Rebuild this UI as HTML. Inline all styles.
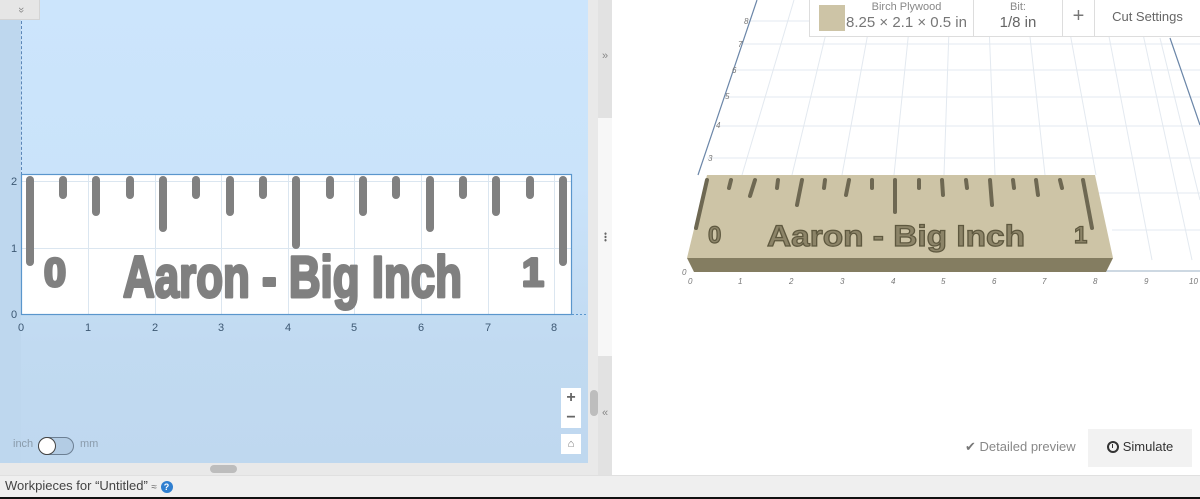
<!DOCTYPE html>
<html><head><meta charset="utf-8"><style>
*{margin:0;padding:0;box-sizing:border-box}
body{width:1200px;height:499px;overflow:hidden;position:relative;font-family:"Liberation Sans",sans-serif;background:#fff}
.abs{position:absolute}
</style></head><body>
<!-- left panel -->
<div class="abs" style="left:0;top:0;width:588px;height:463px;background:linear-gradient(#cce5fc 0,#cae3fa 40%,#c1daf1 75%,#bfd8ef 100%)"></div>
<div class="abs" style="left:0;top:0;width:21px;height:463px;background:#bed7ee"></div>
<div class="abs" style="left:0;top:0;width:40px;height:20px;background:#e6e6e6;border-right:1px solid #d4d4d4;border-bottom:1px solid #d4d4d4"></div>
<div class="abs" style="left:0;top:0;width:40px;height:20px;color:#888;font-size:11px;text-align:center;line-height:18px;transform:rotate(90deg)">»</div>
<div class="abs" style="left:21px;top:21px;height:154px;border-left:1px dashed #5b86b8"></div>
<div class="abs" style="left:0;top:463px;width:598px;height:12px;background:#e9e9e9"></div>
<div class="abs" style="left:210px;top:465px;width:27px;height:8px;border-radius:4px;background:#bdbdbd"></div>
<div class="abs" style="left:588px;top:0;width:10px;height:475px;background:#e9e9e9"></div>
<div class="abs" style="left:590px;top:390px;width:8px;height:26px;border-radius:4px;background:#bdbdbd"></div>
<div class="abs" style="left:598px;top:0;width:14px;height:475px;background:#e2e2e2"></div>
<div class="abs" style="left:598px;top:118px;width:14px;height:238px;background:#f7f7f7"></div>
<div class="abs" style="left:598px;top:50px;width:14px;color:#888;font-size:11px;text-align:center">»</div>
<div class="abs" style="left:598px;top:407px;width:14px;color:#888;font-size:11px;text-align:center">«</div>
<div class="abs" style="left:604px;top:232px;width:3px;height:10px;background:radial-gradient(circle,#666 1px,transparent 1.3px) 0 0/3px 3.3px"></div>

<svg class="abs" style="left:0;top:0" width="600" height="475">
 <rect x="22" y="174" width="549" height="140" fill="#fff"/>
 <g stroke="#dbe6f0" stroke-width="1">
  <line x1="88.5" y1="174" x2="88.5" y2="314"/><line x1="155.5" y1="174" x2="155.5" y2="314"/><line x1="221.5" y1="174" x2="221.5" y2="314"/><line x1="288.5" y1="174" x2="288.5" y2="314"/><line x1="354.5" y1="174" x2="354.5" y2="314"/><line x1="421.5" y1="174" x2="421.5" y2="314"/><line x1="488.5" y1="174" x2="488.5" y2="314"/><line x1="554.5" y1="174" x2="554.5" y2="314"/>
  <line x1="22" y1="248.5" x2="571" y2="248.5"/><line x1="22" y1="181.5" x2="571" y2="181.5"/>
 </g>
 <rect x="21.5" y="174.5" width="550" height="140" fill="none" stroke="#5a96cc" stroke-width="1.2"/>
 <line x1="572" y1="314.5" x2="588" y2="314.5" stroke="#5a96cc" stroke-dasharray="2,2"/>
 <g stroke="#808080" stroke-width="8" stroke-linecap="round">
  <line x1="30" y1="180" x2="30" y2="262"/><line x1="63" y1="180" x2="63" y2="195"/><line x1="96" y1="180" x2="96" y2="212"/><line x1="130" y1="180" x2="130" y2="195"/><line x1="163" y1="180" x2="163" y2="228"/><line x1="196" y1="180" x2="196" y2="195"/><line x1="230" y1="180" x2="230" y2="212"/><line x1="263" y1="180" x2="263" y2="195"/><line x1="296" y1="180" x2="296" y2="245"/><line x1="330" y1="180" x2="330" y2="195"/><line x1="363" y1="180" x2="363" y2="212"/><line x1="396" y1="180" x2="396" y2="195"/><line x1="430" y1="180" x2="430" y2="228"/><line x1="463" y1="180" x2="463" y2="195"/><line x1="496" y1="180" x2="496" y2="212"/><line x1="530" y1="180" x2="530" y2="195"/><line x1="563" y1="180" x2="563" y2="262"/>
 </g>
 <g fill="#808080" stroke="#808080" stroke-width="3" stroke-linejoin="round" font-family="'Liberation Sans',sans-serif" font-weight="bold">
  <text x="44" y="286" font-size="40" textLength="22" lengthAdjust="spacingAndGlyphs">0</text>
  <text x="123" y="297" font-size="58" textLength="339" lengthAdjust="spacingAndGlyphs">Aaron - Big Inch</text>
  <text x="522" y="286" font-size="40" textLength="22" lengthAdjust="spacingAndGlyphs">1</text>
 </g>
 <g fill="#3d5873" font-size="11">
  <text x="11" y="185">2</text><text x="11" y="252">1</text><text x="11" y="318">0</text>
  <text x="18" y="331">0</text><text x="85" y="331">1</text><text x="152" y="331">2</text><text x="218" y="331">3</text><text x="285" y="331">4</text><text x="351" y="331">5</text><text x="418" y="331">6</text><text x="485" y="331">7</text><text x="551" y="331">8</text>
 </g>
</svg>
<!-- zoom buttons -->
<div class="abs" style="left:561px;top:388px;width:20px;height:40px;background:#fff;color:#666;font-size:16px;font-weight:bold;text-align:center;line-height:20px">+<br>−</div>
<div class="abs" style="left:561px;top:434px;width:20px;height:20px;background:#fff;color:#777;font-size:11px;text-align:center;line-height:20px">⌂</div>
<div class="abs" style="left:13px;top:438px;font-size:11px;color:#8a9bab">inch</div>
<div class="abs" style="left:38px;top:437px;width:36px;height:18px;border-radius:9px;background:#b3cce4;border:1px solid #6c7f93"></div>
<div class="abs" style="left:38px;top:437px;width:18px;height:18px;border-radius:9px;background:#fff;border:1.5px solid #444"></div>
<div class="abs" style="left:80px;top:438px;font-size:11px;color:#8a9bab">mm</div>

<!-- right 3D -->
<svg class="abs" style="left:612px;top:0" width="588" height="475">
 <g stroke="#e3e9f0" stroke-width="1" fill="none">
  <line x1="136" y1="21" x2="588" y2="21"/><line x1="131" y1="44" x2="588" y2="44"/><line x1="123" y1="70" x2="588" y2="70"/><line x1="115" y1="97" x2="588" y2="97"/><line x1="105" y1="126" x2="588" y2="126"/><line x1="95" y1="158" x2="588" y2="158"/>
  <line x1="480" y1="193" x2="588" y2="193"/><line x1="500" y1="230" x2="588" y2="230"/>
  <line x1="182" y1="0" x2="130" y2="175"/><line x1="222" y1="0" x2="180" y2="175"/><line x1="262" y1="0" x2="230" y2="175"/><line x1="300" y1="0" x2="282" y2="175"/><line x1="338" y1="0" x2="332" y2="175"/><line x1="376" y1="0" x2="383" y2="175"/><line x1="414" y1="0" x2="433" y2="175"/><line x1="452" y1="0" x2="484" y2="175"/><line x1="490" y1="0" x2="540" y2="260"/><line x1="528" y1="20" x2="580" y2="260"/><line x1="548" y1="38" x2="588" y2="200"/>
 </g>
 <line x1="145" y1="0" x2="86" y2="175" stroke="#6b86a8" stroke-width="1.2"/>
 <line x1="558" y1="38" x2="588" y2="125" stroke="#6b86a8" stroke-width="1.2"/>
 <line x1="100" y1="271" x2="588" y2="271" stroke="#9bb0c6"/>
 <g fill="#777" font-size="8" font-style="italic">
  <text x="132" y="24">8</text><text x="126" y="47">7</text><text x="120" y="73">6</text><text x="113" y="99">5</text><text x="104" y="128">4</text><text x="96" y="161">3</text><text x="70" y="275">0</text>
  <text x="76" y="284">0</text><text x="126" y="284">1</text><text x="177" y="284">2</text><text x="228" y="284">3</text><text x="279" y="284">4</text><text x="329" y="284">5</text><text x="380" y="284">6</text><text x="430" y="284">7</text><text x="481" y="284">8</text><text x="532" y="284">9</text><text x="577" y="284">10</text>
 </g>
 <polygon points="75,258 501,258 494,272 82,272" fill="#847d61"/>
 <polygon points="95,175 483,175 501,258 75,258" fill="#cdc4a6"/>
 <g stroke="#6e6852" stroke-width="4" stroke-linecap="round">
  <line x1="95" y1="180" x2="84" y2="228"/><line x1="119" y1="180" x2="117" y2="188"/><line x1="143" y1="180" x2="138" y2="196"/><line x1="166" y1="180" x2="165" y2="188"/><line x1="190" y1="180" x2="185" y2="205"/><line x1="213" y1="180" x2="212" y2="188"/><line x1="237" y1="180" x2="234" y2="195"/><line x1="260" y1="180" x2="260" y2="188"/><line x1="283" y1="180" x2="283" y2="212"/><line x1="307" y1="180" x2="307" y2="188"/><line x1="330" y1="180" x2="331" y2="195"/><line x1="354" y1="180" x2="355" y2="188"/><line x1="378" y1="180" x2="380" y2="205"/><line x1="401" y1="180" x2="402" y2="188"/><line x1="424" y1="180" x2="426" y2="195"/><line x1="448" y1="180" x2="450" y2="188"/><line x1="471" y1="180" x2="480" y2="228"/>
 </g>
 <g fill="#8c8468" stroke="#5e583f" stroke-width="1.2" font-family="'Liberation Sans','DejaVu Sans',sans-serif" font-weight="bold">
  <text x="96" y="243" font-size="24">0</text>
  <text x="155" y="246" font-size="30" textLength="258" lengthAdjust="spacingAndGlyphs">Aaron - Big Inch</text>
  <text x="462" y="243" font-size="24">1</text>
 </g>
</svg>
<!-- toolbar -->
<div class="abs" style="left:809px;top:-1px;width:392px;height:38px;background:#fff;border:1px solid #ddd"></div>
<div class="abs" style="left:819px;top:5px;width:26px;height:26px;background:#cdc4a6"></div>
<div class="abs" style="left:845px;top:1px;width:123px;text-align:center;font-size:11px;color:#888">Birch Plywood</div>
<div class="abs" style="left:845px;top:14px;width:123px;text-align:center;font-size:15px;color:#777">8.25 × 2.1 × 0.5 in</div>
<div class="abs" style="left:973px;top:0;width:1px;height:37px;background:#ddd"></div>
<div class="abs" style="left:974px;top:1px;width:88px;text-align:center;font-size:11px;color:#888">Bit:</div>
<div class="abs" style="left:974px;top:14px;width:88px;text-align:center;font-size:15px;color:#666">1/8 in</div>
<div class="abs" style="left:1062px;top:0;width:1px;height:37px;background:#ddd"></div>
<div class="abs" style="left:1063px;top:5px;width:31px;text-align:center;font-size:20px;color:#777">+</div>
<div class="abs" style="left:1094px;top:0;width:1px;height:37px;background:#ddd"></div>
<div class="abs" style="left:1095px;top:9px;width:105px;text-align:center;font-size:13px;color:#666">Cut Settings</div>
<!-- bottom right -->
<div class="abs" style="left:965px;top:439px;font-size:13px;color:#888"><span style="color:#777">✔</span> Detailed preview</div>
<div class="abs" style="left:1088px;top:429px;width:104px;height:38px;background:#f2f2f2;font-size:13px;color:#333;line-height:36px;text-align:center"><span style="display:inline-block;width:12px;height:12px;border:2px solid #333;border-radius:50%;vertical-align:-2px;margin-right:4px;position:relative"><span style="position:absolute;left:3px;top:1px;width:1.5px;height:4px;background:#333"></span></span>Simulate</div>
<!-- bottom bar -->
<div class="abs" style="left:0;top:475px;width:1200px;height:22px;background:#efefef;border-top:1px solid #e0e0e0"></div>
<div class="abs" style="left:5px;top:478px;font-size:13px;color:#444">Workpieces for “Untitled” <span style="font-size:10px;color:#666">≈</span> <span style="display:inline-block;width:12px;height:12px;border-radius:50%;background:#2f7fd0;color:#fff;font-size:9px;font-weight:bold;text-align:center;line-height:12px;vertical-align:0">?</span></div>
<div class="abs" style="left:0;top:497px;width:1200px;height:2px;background:#111"></div>
</body></html>
